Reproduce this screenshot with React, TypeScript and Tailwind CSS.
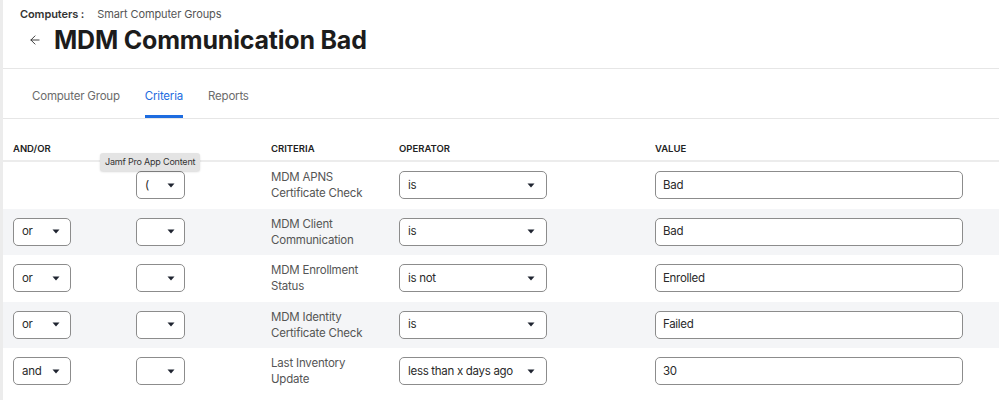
import { ArrowLeft } from "lucide-react";

type Row = {
  andOr: string;
  paren: string;
  criteria: [string, string];
  operator: string;
  value: string;
};

const rows: Row[] = [
  { andOr: "", paren: "(", criteria: ["MDM APNS", "Certificate Check"], operator: "is", value: "Bad" },
  { andOr: "or", paren: "", criteria: ["MDM Client", "Communication"], operator: "is", value: "Bad" },
  { andOr: "or", paren: "", criteria: ["MDM Enrollment", "Status"], operator: "is not", value: "Enrolled" },
  { andOr: "or", paren: "", criteria: ["MDM Identity", "Certificate Check"], operator: "is", value: "Failed" },
  { andOr: "and", paren: "", criteria: ["Last Inventory", "Update"], operator: "less than x days ago", value: "30" },
];

function Caret() {
  return (
    <svg width="8" height="5" viewBox="0 0 8 5" className="shrink-0">
      <path d="M0.5 0.5h7L4 4.5z" fill="#1f2430" />
    </svg>
  );
}

function Select({ label, width, caretPad }: { label: string; width: string; caretPad: string }) {
  return (
    <div
      className={`${width} h-[28px] flex items-center justify-between rounded-[5px] border border-[#8c8c8c] bg-white pl-[8px] ${caretPad} text-[11.5px] tracking-[-0.3px] text-[#2a2a2a] whitespace-nowrap`}
    >
      <span>{label}</span>
      <Caret />
    </div>
  );
}

export default function App() {
  return (
    <div className="w-[999px] h-[400px] overflow-hidden bg-white border-l-[3px] border-[#ececec] font-['Inter',sans-serif] text-[#222]">
      <div className="h-[69px] border-b border-[#e6e6e6] pl-[17px] pt-[6px]">
        <div className="flex items-center text-[11px] leading-[16px] tracking-[-0.1px]">
          <span className="font-semibold text-[#333]">Computers :</span>
          <span className="ml-[13px] text-[#555]">Smart Computer Groups</span>
        </div>
        <div className="flex items-center h-[36px]">
          <ArrowLeft size={14} strokeWidth={1.6} className="ml-[8px] text-[#333]" />
          <h1 className="ml-[12px] text-[25px] font-bold leading-none tracking-[-0.2px] text-[#1c1c1c]">
            MDM Communication Bad
          </h1>
        </div>
      </div>

      <div className="h-[50px] border-b border-[#e6e6e6] flex items-end pl-[29px] gap-[25px] text-[11.5px] tracking-[-0.2px]">
        <div className="h-full flex items-center pt-[6px] text-[#6b6b6b]">Computer Group</div>
        <div className="h-full flex flex-col justify-end">
          <div className="flex-1 flex items-center pt-[9px] text-[#1d6ce0]">Criteria</div>
          <div className="h-[3px] bg-[#1d6ce0]" />
        </div>
        <div className="h-full flex items-center pt-[6px] text-[#6b6b6b]">Reports</div>
      </div>

      <div className="relative">
        <div className="grid grid-cols-[123px_135px_128px_256px_1fr] pl-[10px] h-[43px] items-end pb-[4px] border-b-2 border-[#ececec] text-[9.5px] font-semibold text-[#222]">
          <div>AND/OR</div>
          <div />
          <div>CRITERIA</div>
          <div>OPERATOR</div>
          <div>VALUE</div>
        </div>

        <div className="absolute left-[97px] top-[34px] rounded-[3px] bg-[#e4e4e4] px-[5px] py-[2px] text-[9px] tracking-[-0.2px] text-[#333] shadow-[0_1px_2px_rgba(0,0,0,0.15)]">
          Jamf Pro App Content
        </div>

        {rows.map((r, i) => (
          <div
            key={i}
            className={`grid grid-cols-[123px_135px_128px_256px_1fr] pl-[10px] h-[46.5px] items-center ${
              i % 2 === 1 ? "bg-[#f4f5f7]" : "bg-white"
            }`}
          >
            <div>{r.andOr && <Select label={r.andOr} width="w-[58px]" caretPad="pr-[10px]" />}</div>
            <div>
              <Select label={r.paren} width="w-[49px]" caretPad="pr-[9px]" />
            </div>
            <div className="text-[11.5px] leading-[16px] tracking-[-0.2px] text-[#555]">
              <div>{r.criteria[0]}</div>
              <div>{r.criteria[1]}</div>
            </div>
            <div>
              <Select label={r.operator} width="w-[148px]" caretPad="pr-[11px]" />
            </div>
            <div>
              <div className="w-[308px] h-[28px] flex items-center rounded-[5px] border border-[#8c8c8c] bg-white pl-[7px] text-[11.5px] tracking-[-0.3px] text-[#2a2a2a]">
                {r.value}
              </div>
            </div>
          </div>
        ))}
      </div>
    </div>
  );
}
